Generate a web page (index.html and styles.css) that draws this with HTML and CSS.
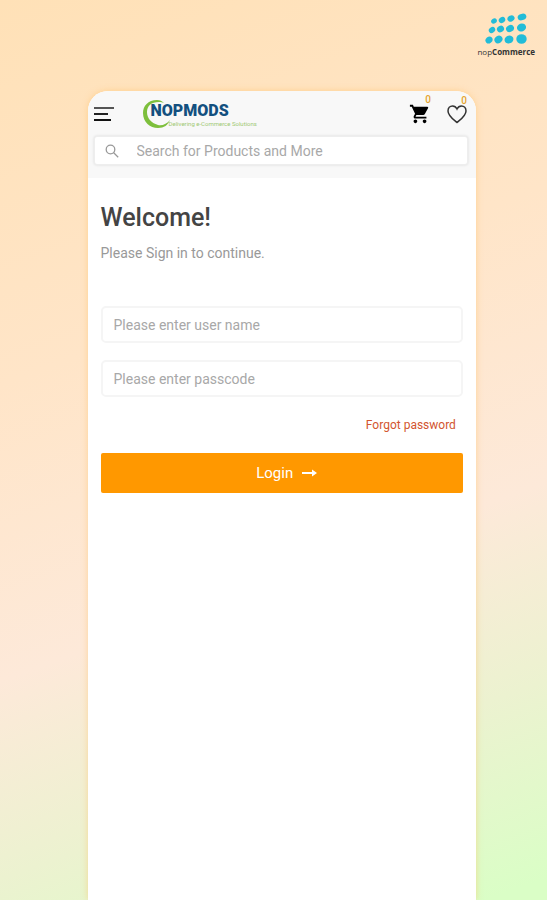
FILE: index.html
```html
<!DOCTYPE html>
<html lang="en">
  <head>
    <meta charset="UTF-8">
    <meta name="viewport" content="width=device-width, initial-scale=1">
    <title>Nopmods - Sign in</title>
    <link rel="stylesheet" href="styles.css">
  </head>
  <body>
    <header class="page-header">
      <div class="platform">
        <svg class="platform-logo" width="42" height="33" viewBox="0 0 42 33" fill="#22bcd8" aria-hidden="true">
          <ellipse cx="9" cy="8" rx="3" ry="2.5" transform="rotate(-35 9 8)"/>
          <ellipse cx="17" cy="7" rx="3.4" ry="2.8" transform="rotate(-30 17 7)"/>
          <ellipse cx="26" cy="5.5" rx="3.7" ry="3" transform="rotate(-25 26 5.5)"/>
          <ellipse cx="37" cy="4" rx="4.4" ry="3.2" transform="rotate(-15 37 4)"/>
          <ellipse cx="7" cy="17" rx="3.4" ry="2.8" transform="rotate(-35 7 17)"/>
          <ellipse cx="15.5" cy="16" rx="3.7" ry="3.1" transform="rotate(-30 15.5 16)"/>
          <ellipse cx="25" cy="15.5" rx="4.1" ry="3.4" transform="rotate(-25 25 15.5)"/>
          <ellipse cx="36.5" cy="14.5" rx="4.6" ry="4" transform="rotate(-20 36.5 14.5)"/>
          <ellipse cx="4" cy="27" rx="3.7" ry="3.2" transform="rotate(-40 4 27)"/>
          <ellipse cx="13.5" cy="26.5" rx="4.2" ry="3.6" transform="rotate(-35 13.5 26.5)"/>
          <ellipse cx="24" cy="26.5" rx="4.5" ry="3.9" transform="rotate(-25 24 26.5)"/>
          <ellipse cx="36.5" cy="26" rx="5.2" ry="4.8"/>
        </svg>
        <div class="platform-name">nop<b>Commerce</b></div>
      </div>
    </header>

    <main class="phone">
      <div class="app-bar">
        <div class="app-row">
          <button class="icon-button" type="button" aria-label="Menu">
            <svg width="20" height="14" viewBox="0 0 20 14" stroke-width="2" aria-hidden="true">
              <path d="M0 1h20" stroke="#555"/>
              <path d="M0 7h14" stroke="#222"/>
              <path d="M0 13h17" stroke="#111"/>
            </svg>
          </button>
          <a class="brand" href="#">
            <svg class="brand-ring" width="28" height="28" viewBox="0 0 28 28" aria-hidden="true">
              <path d="M14 0C5 0 0 6 0 13c0 9 7 15 15 15 6 0 10-3 12-8-3 4-8 6-12 5C8 23 4 18 4 12 4 6 8 2 16 2c2 0 3 0 5 1-2-2-4-3-7-3z" fill="#7dbf3c"/>
            </svg>
            <span class="brand-text">
              <span class="brand-name">NOPMODS</span>
              <span class="brand-tagline">Delivering e-Commerce Solutions</span>
            </span>
          </a>
          <div class="actions">
            <button class="icon-button" type="button" aria-label="Cart">
              <svg width="22" height="22" viewBox="0 0 24 24" aria-hidden="true">
                <path d="M7 18c-1.100 0-2 .9-2 2s.9 2 2 2 2-.9 2-2-.9-2-2-2zM1 2v2h2l3.600 7.600-1.350 2.450C4.520 15.370 5.480 17 7 17h12v-2H7.420c-.14 0-.25-.11-.25-.25l.03-.12L8.100 13h7.450c.75 0 1.410-.41 1.750-1.030L20.880 5.500C21.250 4.820 20.760 4 20 4H5.210L4.270 2H1zm16 16c-1.100 0-2 .9-2 2s.9 2 2 2 2-.9 2-2-.9-2-2-2z" fill="#000"/>
              </svg>
              <span class="badge">0</span>
            </button>
            <button class="icon-button" type="button" aria-label="Wishlist">
              <svg width="20" height="20" viewBox="0 0 20 20" fill="none" stroke="#333" stroke-width="1.5" aria-hidden="true">
                <path d="M10 18.5C7 16 1 12 1 7c0-3 2-5 4.500-5C7.500 2 9 3 10 5c1-2 2.500-3 4.500-3C17 2 19 4 19 7c0 5-6 9-9 11.500z"/>
              </svg>
              <span class="badge">0</span>
            </button>
          </div>
        </div>
        <label class="search">
          <svg width="14" height="14" viewBox="0 0 14 14" fill="none" stroke="#999" stroke-width="1.3" aria-hidden="true">
            <circle cx="5.5" cy="5.5" r="4.3"/>
            <path d="M8.700 8.700l4.500 4.500"/>
          </svg>
          <input type="search" placeholder="Search for Products and More" aria-label="Search">
        </label>
      </div>

      <form class="login">
        <h1>Welcome!</h1>
        <p>Please Sign in to continue.</p>
        <input class="field" type="text" placeholder="Please enter user name" aria-label="User name">
        <input class="field" type="password" placeholder="Please enter passcode" aria-label="Passcode">
        <a class="forgot" href="#">Forgot password</a>
        <button class="submit" type="submit">
          Login
          <svg width="15" height="8" viewBox="0 0 15 8" fill="#fff" aria-hidden="true">
            <path d="M0 3h10V0.500L15 4l-5 3.500V5H0z"/>
          </svg>
        </button>
      </form>
    </main>
  </body>
</html>
```
FILE: styles.css
```css
* {
  box-sizing: border-box;
}

body {
  margin: 0;
  min-height: 100vh;
  display: flex;
  flex-direction: column;
  font-family: Roboto, "Liberation Sans", sans-serif;
  background: linear-gradient(160deg, #ffe1b7 0%, #ffe5c8 35%, #fde9d9 62%, #ecf2d0 80%, #dafec6 98%);
}

button,
input {
  font-family: inherit;
}

.page-header {
  display: flex;
  justify-content: flex-end;
  height: 91px;
  padding: 13px 12px 0;
}

.platform {
  display: flex;
  flex-direction: column;
  align-items: center;
}

.platform-name {
  font-family: "Open Sans", sans-serif;
  font-size: 8px;
  line-height: 12px;
  color: #333;
}

.phone {
  flex: 1;
  margin: 0 13% 0 16%;
  border-radius: 20px 20px 0 0;
  background: #fff;
  box-shadow: 0 0 6px rgba(255, 190, 90, 0.5);
}

.app-bar {
  padding: 8px 8px 13px 6px;
  border-radius: 20px 20px 0 0;
  background: #f8f8f8;
}

.app-row {
  display: flex;
  align-items: center;
  height: 29px;
  margin-bottom: 8px;
}

.icon-button {
  position: relative;
  display: flex;
  padding: 0;
  border: none;
  background: none;
  cursor: pointer;
}

.badge {
  position: absolute;
  top: -8px;
  right: 0;
  font-size: 10px;
  font-weight: 500;
  line-height: 10px;
  color: #e5a32e;
}

.brand {
  display: flex;
  margin-left: 29px;
  text-decoration: none;
}

.brand-text {
  display: flex;
  flex-direction: column;
  margin-left: -20px;
  padding-top: 2px;
}

.brand-name {
  font-size: 16px;
  font-weight: 900;
  line-height: 18px;
  color: #13507f;
}

.brand-tagline {
  padding-left: 18px;
  font-size: 6px;
  line-height: 8px;
  color: #9fc873;
}

.actions {
  display: flex;
  align-items: center;
  gap: 16px;
  margin-left: auto;
  padding-right: 1px;
}

.search {
  display: flex;
  align-items: center;
  gap: 18px;
  height: 29px;
  padding: 0 10px;
  border: 1px solid #eee;
  border-radius: 3px;
  background: #fff;
  box-shadow: 0 0 3px rgba(0, 0, 0, 0.12);
}

.search input {
  flex: 1;
  min-width: 0;
  padding: 0;
  border: none;
  outline: none;
  background: none;
  font-size: 14px;
}

::placeholder {
  color: #a8a8a8;
  opacity: 1;
}

.login {
  display: flex;
  flex-direction: column;
  padding: 24px 13px;
}

.login h1 {
  margin: 0 0 9px;
  font-size: 25px;
  font-weight: 500;
  line-height: 32px;
  color: #444;
}

.login p {
  margin: 0 0 43px;
  font-size: 14px;
  line-height: 20px;
  color: #999;
}

.field {
  height: 37px;
  margin-bottom: 17px;
  padding: 0 11px;
  border: 2px solid #f5f5f5;
  border-radius: 5px;
  background: #fff;
  font-size: 14px;
}

.forgot {
  align-self: flex-end;
  margin-bottom: 17px;
  padding-right: 7px;
  font-size: 12px;
  line-height: 22px;
  color: #d2552f;
  text-decoration: none;
}

.submit {
  display: flex;
  align-items: center;
  justify-content: center;
  gap: 9px;
  height: 40px;
  padding: 0 0 0 10px;
  border: none;
  border-radius: 2px;
  background: #ff9800;
  color: #fff;
  font-size: 15px;
  cursor: pointer;
}
```
